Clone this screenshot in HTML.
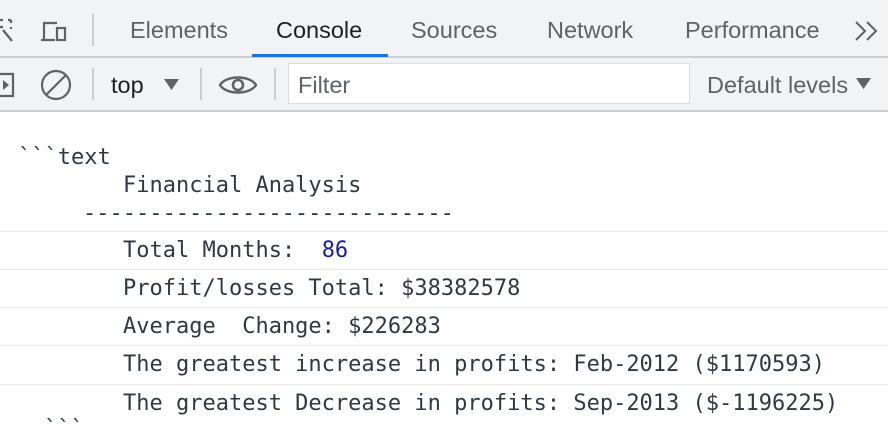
<!DOCTYPE html>
<html><head><style>
body{margin:0;width:888px;height:438px;overflow:hidden;background:#fff;position:relative;font-family:"Liberation Sans",sans-serif}
.a{position:absolute}
.tb{left:0;top:0;width:888px;height:56px;background:#f1f3f4;border-bottom:2px solid #cbcdd1}
.tb2{left:0;top:58px;width:888px;height:52px;background:#f1f3f4;border-bottom:2px solid #cbcdd1}
.tab{top:17px;font-size:23.5px;color:#5f6368}
.m{font-family:"DejaVu Sans Mono","Liberation Mono",monospace;font-size:22px;color:#303942;white-space:pre;line-height:26px}
.sep{left:0;width:888px;height:1px;background:#e8eaed}
.vs{width:2px;background:#cbcdd1}
</style></head><body>
<div class="a tb"></div>
<div class="a tb2"></div>
<svg class="a" style="left:0;top:16px" width="80" height="30"><g stroke="#5f6368" stroke-width="2.2" fill="none"><path d="M0 4h3M8 4h3M11 4v3M11 11v2M0 11h3M3 14l9 11"/><path d="M41 24h14M44 24V7h13"/><rect x="57" y="12" width="8" height="12"/></g></svg>
<div class="a vs" style="left:92px;top:14px;height:32px"></div>
<div class="a tab" style="left:130px">Elements</div>
<div class="a tab" style="left:276px;color:#202124">Console</div>
<div class="a" style="left:252px;top:54px;width:136px;height:3px;background:#1a73e8"></div>
<div class="a tab" style="left:411px">Sources</div>
<div class="a tab" style="left:547px">Network</div>
<div class="a tab" style="left:685px">Performance</div>
<svg class="a" style="left:854px;top:20px" width="26" height="22"><path d="M2 2l9 9-9 9M13 2l9 9-9 9" stroke="#5f6368" stroke-width="2" fill="none"/></svg>
<svg class="a" style="left:0;top:68px" width="80" height="34"><g stroke="#5f6368" stroke-width="2.2" fill="none"><path d="M0 6h13v22H0"/><circle cx="56" cy="17" r="14"/><path d="M46 27L66 7"/></g><path d="M3 12l6 5-6 5z" fill="#5f6368"/></svg>
<div class="a vs" style="left:92px;top:68px;height:32px"></div>
<div class="a" style="left:111px;top:72px;font-size:23.5px;color:#202124">top</div>
<svg class="a" style="left:164px;top:79px" width="16" height="12"><path d="M0 0h15L7.5 11z" fill="#5f6368"/></svg>
<div class="a vs" style="left:200px;top:68px;height:32px"></div>
<svg class="a" style="left:218px;top:72px" width="40" height="26"><path d="M2 13C8 3 32 3 38 13C32 23 8 23 2 13z" stroke="#5f6368" stroke-width="2.4" fill="none"/><circle cx="20" cy="13" r="5" stroke="#5f6368" stroke-width="2.6" fill="none"/></svg>
<div class="a vs" style="left:274px;top:68px;height:32px"></div>
<div class="a" style="left:288px;top:63px;width:400px;height:39px;background:#fff;border:1px solid #dadce0"></div>
<div class="a" style="left:298px;top:72px;font-size:23.5px;color:#5f6368">Filter</div>
<div class="a" style="left:707px;top:72px;font-size:23.5px;color:#5f6368">Default levels</div>
<svg class="a" style="left:856px;top:78px" width="16" height="12"><path d="M0 0h15L7.5 11z" fill="#5f6368"/></svg>
<div class="a m" style="left:18px;top:145px">&#96;&#96;&#96;text</div>
<div class="a m" style="left:123px;top:173px">Financial Analysis</div>
<div class="a m" style="left:83px;top:201px">----------------------------</div>
<div class="a sep" style="top:231px"></div>
<div class="a m" style="left:123px;top:238px">Total Months:  <span style="color:#1a1aa6">86</span></div>
<div class="a sep" style="top:269px"></div>
<div class="a m" style="left:123px;top:276px">Profit/losses Total: $38382578</div>
<div class="a sep" style="top:307px"></div>
<div class="a m" style="left:123px;top:314px">Average  Change: $226283</div>
<div class="a sep" style="top:345px"></div>
<div class="a m" style="left:123px;top:352px">The greatest increase in profits: Feb-2012 ($1170593)</div>
<div class="a sep" style="top:384px"></div>
<div class="a m" style="left:123px;top:391px">The greatest Decrease in profits: Sep-2013 ($-1196225)</div>
<div class="a m" style="left:44px;top:417px">&#96;&#96;&#96;</div>
</body></html>
